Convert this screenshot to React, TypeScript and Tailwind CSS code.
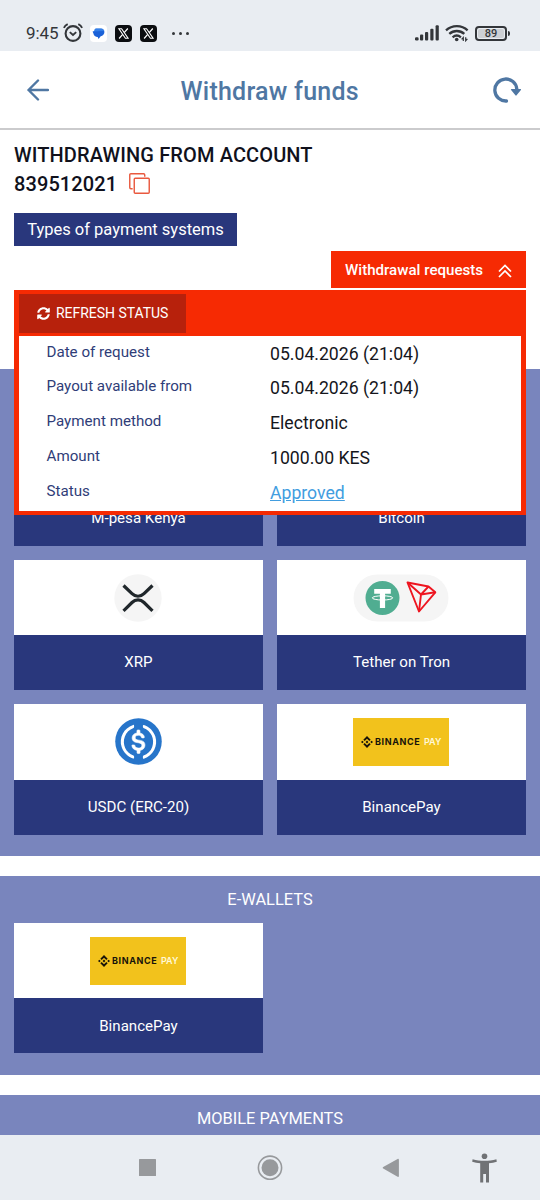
import type { ReactNode } from 'react';

type PaymentTileProps = {
  label: string;
  children?: ReactNode;
};

type PaymentSectionProps = {
  title?: string;
  className?: string;
  children?: ReactNode;
};

const requestRows = [
  { label: 'Date of request', value: '05.04.2026 (21:04)' },
  { label: 'Payout available from', value: '05.04.2026 (21:04)' },
  { label: 'Payment method', value: 'Electronic' },
  { label: 'Amount', value: '1000.00 KES' },
  { label: 'Status', value: 'Approved', link: true },
];

function XBadge() {
  return (
    <svg viewBox="0 0 17 17" className="size-[17px]" aria-hidden="true">
      <rect width="17" height="17" rx="4" fill="#0b0d10" />
      <path
        d="M3.900 3.700h2.700l6.500 9.600h-2.700z"
        fill="none"
        stroke="#fff"
        strokeWidth="1.100"
      />
      <path d="M12.800 3.500 9.200 7.600M7.700 9.300 4.100 13.500" stroke="#fff" strokeWidth="1.200" />
    </svg>
  );
}

function StatusBar() {
  return (
    <div className="flex h-[51px] shrink-0 items-center bg-[#e9edf2] pl-[26px] pr-[30px] pt-[15px] text-[#33363a]">
      <span className="w-[36px] whitespace-nowrap pt-px text-[17px] tracking-[-0.1px]">9:45</span>
      <svg viewBox="0 0 20 20" className="ml-px size-5" fill="none" stroke="currentColor" strokeWidth="2.1" aria-hidden="true">
        <circle cx="10" cy="10.500" r="7.4" />
        <path d="M.9 4.8C1.7 3.2 3 2 4.7 1.2M19.1 4.8C18.3 3.2 17 2 15.3 1.2" strokeWidth="1.9" />
        <path d="m6.8 9.1 3.2 2.9 3.2-2.9" strokeWidth="1.9" />
      </svg>
      <svg viewBox="0 0 17 17" className="ml-[7px] size-[17px]" aria-hidden="true">
        <rect width="17" height="17" rx="4" fill="#fff" />
        <path
          d="M6 3.500h5c2 0 3.400 1.500 3.400 3.500 0 2-1.500 3.800-3.700 4.200L8.500 14l-.8-1.900C5.400 11.900 3.700 10.700 3.500 8.800L2.600 6.400l1.700-.4c.1-1.500.7-2.500 1.700-2.500Z"
          fill="#1b62d8"
        />
        <path d="M2.600 6.400l1.700-.4c.1-1.500.7-2.500 1.700-2.500h5c1.700 0 2.900 1 3.300 2.500Z" fill="#4592f4" opacity=".6" />
      </svg>
      <div className="ml-2 flex gap-2">
        <XBadge />
        <XBadge />
      </div>
      <div className="ml-[15px] flex gap-[4px]">
        <i className="size-[3px] rounded-full bg-current" />
        <i className="size-[3px] rounded-full bg-current" />
        <i className="size-[3px] rounded-full bg-current" />
      </div>

      <svg viewBox="0 0 25 16" className="ml-auto h-4 w-[25px]" fill="currentColor" aria-hidden="true">
        <rect x="0" y="12.2" width="3.6" height="3.3" rx="1.2" />
        <rect x="5" y="9.5" width="3.2" height="6" rx="1" />
        <rect x="10" y="7" width="3.2" height="8.5" rx="1" />
        <rect x="15.300" y="3.8" width="3.2" height="11.7" rx="1" />
        <rect x="20.600" y="0.3" width="3.2" height="15.2" rx="1" />
      </svg>
      <svg viewBox="0 0 24 18" className="ml-[5px] h-[18px] w-6" fill="none" stroke="currentColor" strokeWidth="2.3" aria-hidden="true">
        <path d="M1 6.3c6-5.6 15.800-5.600 21.600 0M4.300 9.900c4.300-3.900 10.700-3.900 15 0M7.600 13.300c2.600-2.200 5.700-2.200 8.300 0" />
        <circle cx="11.700" cy="15.500" r="1.800" fill="currentColor" stroke="none" />
        <path d="M18.300 17v-3.500l-1.700 1.900M20.700 13.200v3.500l1.700-1.900" strokeWidth="1.200" />
      </svg>
      <div className="ml-[6px] flex items-center">
        <div className="flex h-[15px] w-8 items-center justify-center rounded-[4px] border-2 border-[#33363a] p-px">
          <span className="flex h-[9px] w-full items-center justify-center rounded-[2px] bg-[#cdd0d4] text-[11px] font-medium leading-none">
            89
          </span>
        </div>
        <i className="ml-px h-[5px] w-[2px] rounded-r bg-current" />
      </div>
    </div>
  );
}

function Header() {
  return (
    <header className="flex h-[79px] shrink-0 items-center border-b-2 border-[#cbcbcd] bg-white pl-[27px] pr-[19px] text-[#4f77a3]">
      <svg viewBox="0 0 22 22" className="size-[22px]" fill="none" stroke="currentColor" strokeWidth="2.400" strokeLinecap="round" strokeLinejoin="round" aria-hidden="true">
        <path d="M21 11H1.500M11 1.500 1.500 11l9.500 9.500" />
      </svg>
      <h1 className="ml-[131.500px] whitespace-nowrap pt-[4px] text-[25px] font-medium leading-none tracking-[0.250px]">
        Withdraw funds
      </h1>
      <svg viewBox="0 0 28 26" className="ml-auto h-[26px] w-7" aria-hidden="true">
        <path d="M13.500 24A11 11 0 1 1 23.800 12" fill="none" stroke="currentColor" strokeWidth="3.300" strokeLinecap="round" />
        <path d="M18.600 12h8.800a.7.700 0 0 1 .5 1.100l-4.300 5.200a.8.800 0 0 1-1.200 0l-4.300-5.200a.7.700 0 0 1 .5-1.100Z" fill="currentColor" />
      </svg>
    </header>
  );
}

function RequestsPanel() {
  return (
    <div className="absolute left-[14px] top-[160px] flex h-[224.500px] w-[512px] flex-col bg-[#f62a03] px-[5px] pb-[4px] pt-[4px]">
      <button
        type="button"
        className="flex h-[38.500px] w-[167px] items-center bg-[#b7210c] pl-[17.500px] text-[14px] tracking-[-0.030px] text-white"
      >
        <svg viewBox="0 0 512 512" className="mr-[6.500px] size-[13px]" fill="currentColor" aria-hidden="true">
          <path d="M370.720 133.280C339.458 104.008 298.888 87.962 255.848 88c-77.458.068-144.328 53.178-162.791 126.850-1.344 5.363-6.122 9.150-11.651 9.150H24.103c-7.498 0-13.194-6.807-11.807-14.176C33.933 94.924 134.813 8 256 8c66.448 0 126.791 26.136 171.315 68.685L463.030 40.970C478.149 25.851 504 36.559 504 57.941V192c0 13.255-10.745 24-24 24H345.941c-21.382 0-32.090-25.851-16.971-40.971l41.750-41.749zM32 296h134.059c21.382 0 32.090 25.851 16.971 40.971l-41.750 41.750c31.262 29.273 71.835 45.319 114.876 45.280 77.418-.070 144.315-53.144 162.787-126.849 1.344-5.363 6.122-9.150 11.651-9.150h57.304c7.498 0 13.194 6.807 11.807 14.176C478.067 417.076 377.187 504 256 504c-66.448 0-126.791-26.136-171.315-68.685L48.970 471.030C33.851 486.149 8 475.441 8 454.059V320c0-13.255 10.745-24 24-24z" />
        </svg>
        REFRESH STATUS
      </button>
      <dl className="mt-[3px] flex-1 bg-white">
        {requestRows.map((row) => (
          <div key={row.label} className="flex h-[34.800px] pl-[27.500px]">
            <dt className="w-[223.500px] whitespace-nowrap pt-[5px] text-[15.150px] leading-[22px] text-[#2f3d78]">{row.label}</dt>
            <dd className="whitespace-nowrap pt-[7px] text-[17.650px] leading-[22px] text-[#15161c]">
              {row.link ? (
                <a href="#status" className="text-[#429ddf] underline">
                  {row.value}
                </a>
              ) : (
                row.value
              )}
            </dd>
          </div>
        ))}
      </dl>
    </div>
  );
}

function PaymentSection({ title, className, children }: PaymentSectionProps) {
  return (
    <section className={`w-full shrink-0 bg-[#7985bd] px-[14px] ${className ?? ''}`}>
      <h2 className="flex h-[47px] items-center justify-center pt-[2px] text-[16.400px] text-white">{title}</h2>
      <div className="grid grid-cols-2 gap-[14px]">{children}</div>
    </section>
  );
}

function PaymentTile({ label, children }: PaymentTileProps) {
  return (
    <div className="flex h-[130.400px] flex-col bg-white">
      <div className="flex flex-1 items-center justify-center pr-px">{children}</div>
      <div className="flex h-[55px] items-center justify-center bg-[#29377c] text-[15.100px] text-white">
        {label}
      </div>
    </div>
  );
}

function XrpLogo() {
  return (
    <svg viewBox="0 0 48 48" className="size-12" aria-hidden="true">
      <circle cx="24" cy="24" r="23.700" fill="#f5f5f5" />
      <path
        d="M9.500 11.500 18 19.700c3.500 3.400 8.500 3.400 12 0l8.500-8.200M9.500 36.800 18 28.500c3.500-3.400 8.500-3.400 12 0l8.500 8.300"
        fill="none"
        stroke="#20272b"
        strokeWidth="3.200"
      />
    </svg>
  );
}

function TetherTronLogo() {
  return (
    <svg viewBox="0 0 96 48" className="h-12 w-24" aria-hidden="true">
      <rect x=".5" y=".5" width="95" height="47" rx="23.500" fill="#f5f5f5" />
      <circle cx="29.500" cy="24" r="17" fill="#50ad91" />
      <path d="M21.200 15h16.600v4.700h-5.700V34h-5.200V19.700h-5.700z" fill="#fff" />
      <ellipse cx="29.500" cy="23.900" rx="10.300" ry="2.100" fill="none" stroke="#fff" strokeWidth="1" />
      <g fill="none" stroke="#ee1520" strokeWidth="1.900" strokeLinejoin="round">
        <path d="M54.500 8.500 75.500 12.500 82.300 18.300 66 37.500Z" />
        <path d="M54.500 8.500 68 20.500 82.300 18.300M75.500 12.500 68 20.500 66 37.500" />
      </g>
    </svg>
  );
}

function UsdcLogo() {
  return (
    <svg viewBox="0 0 2000 2000" className="size-[47px]" aria-hidden="true">
      <circle cx="1000" cy="1000" r="990" fill="#2775ca" />
      <path
        d="M1275 1158.330c0-145.830-87.500-195.830-262.500-216.660-125-16.670-150-50-150-108.340s41.670-95.830 125-95.830c75 0 116.670 25 137.500 87.500 4.170 12.500 16.670 20.830 29.170 20.830h66.660c16.670 0 29.170-12.500 29.170-29.160v-4.170c-16.670-91.670-91.670-162.500-187.500-170.830v-100c0-16.670-12.500-29.170-33.330-33.340h-62.500c-16.670 0-29.170 12.500-33.340 33.340v95.830c-125 16.670-204.160 100-204.160 204.170 0 137.500 83.330 191.660 258.330 212.500 116.670 20.830 154.170 45.830 154.170 112.500s-58.340 112.500-137.500 112.500c-108.340 0-145.840-45.840-158.340-108.340-4.160-16.660-16.660-25-29.160-25h-70.840c-16.660 0-29.160 12.500-29.160 29.170v4.170c16.660 104.160 83.330 179.160 220.830 200v100c0 16.660 12.500 29.160 33.330 33.330h62.500c16.670 0 29.170-12.500 33.340-33.330v-100c125-20.840 208.330-108.340 208.330-220.840z"
        fill="#fff"
        stroke="#fff"
        strokeWidth="24"
      />
      <path
        d="M787.500 1595.830c-325-116.660-491.670-479.160-370.830-800 62.500-175 200-308.330 370.830-370.830 16.670-8.330 25-20.830 25-41.670V325c0-16.670-8.330-29.170-25-33.330-4.170 0-12.500 0-16.670 4.160-395.830 125-612.500 545.840-487.500 941.670 75 233.330 254.170 412.500 487.500 487.500 16.670 8.330 33.340 0 37.500-16.670 4.170-4.160 4.170-8.330 4.170-16.660v-58.340c0-12.500-12.500-29.160-25-37.500zM1229.170 295.830c-16.670-8.330-33.340 0-37.500 16.670-4.170 4.170-4.170 8.330-4.170 16.670v58.330c0 16.670 12.500 33.330 25 41.670 325 116.660 491.670 479.160 370.830 800-62.500 175-200 308.330-370.830 370.830-16.670 8.330-25 20.830-25 41.670V1700c0 16.670 8.330 29.170 25 33.330 4.170 0 12.500 0 16.670-4.160 395.830-125 612.500-545.840 487.500-941.670-75-237.500-258.340-416.670-487.500-491.670z"
        fill="#fff"
      />
    </svg>
  );
}

function BinancePayLogo() {
  return (
    <div className="flex h-12 w-24 items-center bg-[#f2c21c] pl-[8px] font-['Inter',sans-serif]">
      <svg viewBox="0 0 126.610 126.610" className="size-[12px] shrink-0" fill="#17130a" aria-hidden="true">
        <path d="m38.730 53.200 24.590-24.580 24.600 24.600 14.300-14.310L63.320 0l-38.900 38.900zM0 63.310l14.300-14.310 14.310 14.310-14.310 14.300zM38.730 73.410l24.590 24.590 24.600-24.600 14.310 14.290-38.900 38.910-38.910-38.880zM98 63.310l14.300-14.310 14.310 14.300-14.310 14.320zM77.830 63.300 63.320 48.780 48.790 63.300l14.530 14.530z" />
      </svg>
      <span className="ml-[2px] w-[46px] whitespace-nowrap text-[9px] font-bold leading-none tracking-[0.600px] text-[#17130a]">BINANCE</span>
      <span className="ml-[3px] whitespace-nowrap text-[9px] font-semibold leading-none text-[#fff8d8]">PAY</span>
    </div>
  );
}

function NavigationBar() {
  return (
    <nav className="h-[65px] shrink-0 bg-[#e9edf2]" aria-label="System navigation">
      <svg viewBox="0 0 540 65" className="h-[65px] w-[540px]" fill="#97999c" aria-hidden="true">
        <rect x="139" y="24" width="17" height="17" rx=".5" />
        <circle cx="270" cy="32.700" r="11.600" fill="none" stroke="#97999c" strokeWidth="1.600" />
        <circle cx="270" cy="32.700" r="8.500" />
        <path d="M383.200 32.100 397.600 24c.7-.4 1.300 0 1.300.7V41c0 .8-.6 1.200-1.300.8l-14.400-8.200c-.6-.4-.6-1.100 0-1.500Z" />
        <g fill="#707275">
          <circle cx="484.500" cy="21.300" r="2.800" />
          <path d="M472.600 24.200c7.600 2 16.200 2 23.800 0l.4 2.600c-2.500.7-5 1.200-7.800 1.400v19.300h-3V39h-2.800v8.500h-3V28.200c-2.800-.2-5.500-.7-8-1.400z" />
        </g>
      </svg>
    </nav>
  );
}

export default function App() {
  return (
    <div className="flex h-[1200px] w-[540px] flex-col overflow-hidden bg-white font-['Roboto',sans-serif]">
      <StatusBar />
      <Header />

      <main className="relative flex min-h-0 flex-1 flex-col items-start overflow-hidden pt-[11px]">
        <div className="px-[14px] text-[20px] font-medium leading-[29px] text-[#10111c]">
          <p className="whitespace-nowrap tracking-[0.120px]">WITHDRAWING FROM ACCOUNT</p>
          <div className="flex items-center">
            <span className="tracking-[0.100px]">839512021</span>
            <svg viewBox="0 0 22 22" className="mb-[3px] ml-[11.500px] size-[21px]" fill="none" stroke="#e9593f" strokeWidth="1.500" strokeLinejoin="round" aria-hidden="true">
              <path d="M3.800 16.500H2A1.200 1.200 0 0 1 .8 15.300V2A1.200 1.200 0 0 1 2 .8h13.300A1.200 1.200 0 0 1 16.500 2v1.800" />
              <rect x="5.500" y="5.500" width="15.700" height="15.700" rx="1" />
            </svg>
          </div>
        </div>
        <button
          type="button"
          className="ml-[14px] mt-[14px] h-[33px] w-[223px] shrink-0 whitespace-nowrap bg-[#29377c] pt-[2px] text-[16.500px] text-white"
        >
          Types of payment systems
        </button>
        <button
          type="button"
          className="ml-auto mr-[14px] mt-[5px] flex h-[37px] w-[195px] shrink-0 items-center bg-[#f62a03] pl-[14px] pt-px text-[15.100px] font-medium text-white"
        >
          Withdrawal requests
          <svg viewBox="0 0 14 14" className="ml-auto mr-[14px] mt-[2px] size-[14px]" fill="none" stroke="currentColor" strokeWidth="1.700" aria-hidden="true">
            <path d="m1 7.500 6-6 6 6M1 13l6-6 6 6" />
          </svg>
        </button>

        <PaymentSection className="mt-[80.500px] h-[487px]">
          <PaymentTile label="M-pesa Kenya" />
          <PaymentTile label="Bitcoin" />
          <PaymentTile label="XRP">
            <XrpLogo />
          </PaymentTile>
          <PaymentTile label="Tether on Tron">
            <TetherTronLogo />
          </PaymentTile>
          <PaymentTile label="USDC (ERC-20)">
            <UsdcLogo />
          </PaymentTile>
          <PaymentTile label="BinancePay">
            <BinancePayLogo />
          </PaymentTile>
        </PaymentSection>

        <PaymentSection title="E-WALLETS" className="mt-[20.500px] h-[198.500px]">
          <PaymentTile label="BinancePay">
            <BinancePayLogo />
          </PaymentTile>
        </PaymentSection>

        <PaymentSection title="MOBILE PAYMENTS" className="mt-[20.500px] h-[60px]" />

        <RequestsPanel />
      </main>

      <NavigationBar />
    </div>
  );
}
